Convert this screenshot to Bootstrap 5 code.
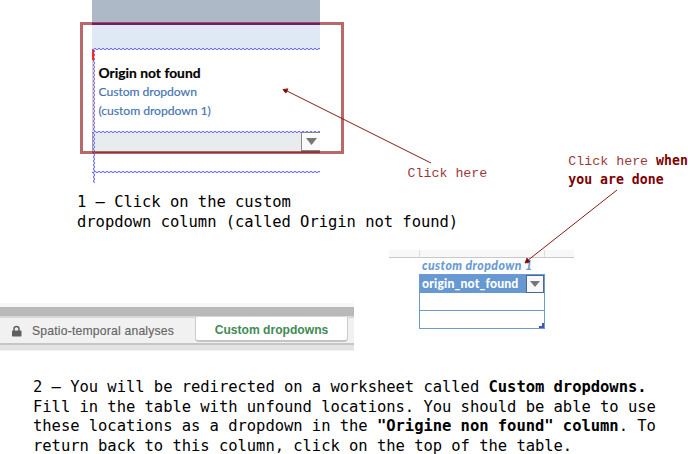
<!DOCTYPE html>
<html lang="en">
<head>
<meta charset="utf-8">
<title>Custom dropdowns guide</title>
<link href="https://cdn.jsdelivr.net/npm/bootstrap@5.3.0/dist/css/bootstrap.min.css" rel="stylesheet">
<style>
body{background:#fff;color:#000}
.guide{width:688px;height:454px}
.step{font:15.5px/19.6px "DejaVu Sans Mono","Liberation Mono",monospace;letter-spacing:-.036px;white-space:nowrap}
.note{font:13.3px/18px "Liberation Mono",monospace;color:#800000;white-space:nowrap}
.note span{opacity:.78}
.note b,.step b{font-weight:700}
.note b{font-family:"DejaVu Sans Mono",monospace;font-size:13.2px}
.upper{height:193.3px}
.sheet{width:228px;height:183px;margin-left:92px;font-family:Lato,Carlito,sans-serif}
.head-dark{height:23px;background:#adb9c7}
.head-light{height:25px;background:#dfe9f6;border-top:2px solid #711d6b}
.dots{height:2px;background:repeating-conic-gradient(#7272f4 0 25%,#dcdcff 0 50%) 0 0/4px 2px}
.vdots{left:1px;top:50px;width:2px;height:133px;background:repeating-conic-gradient(#7777f5 0 25%,#d4d4ff 0 50%) 0 0/2px 4px}
.cell{height:81px;padding:14px 0 0 5.5px;border-left:1px solid #f5c9ad;font-size:12.2px;letter-spacing:-.06px;line-height:18.3px;color:#3f72b2;-webkit-text-stroke:.15px #3f72b2;white-space:nowrap}
.cell b{font-size:13.8px;color:#000;letter-spacing:.02px;-webkit-text-stroke:.2px #000}
.cell-flag{left:0;top:50px;width:2px;height:10px;background:#f22}
.entry{height:20px;background:#e8ecef;border-left:1px solid #9aa1ac;border-bottom:1px solid #777}
.drop{width:19px;background:#fafafa;border:1px solid #888;border-right:0;border-bottom:2px solid #888;margin-top:-1px}
.frame{left:80px;top:22px;width:264px;height:132px;border:3px solid rgba(145,20,20,.64)}
.head-line{left:92px;top:23px;width:228px;height:2px;background:#711d6b}
.click{margin:165px 0 0 87.5px}
.done{margin:152px 0 0 81px}
.caption-one{margin-left:77px;height:56.7px}
.caption-one,.caption-one+div{position:static}
.lower{height:128.3px}
.tabs-strip{width:354px;height:48px;margin-top:53px;border-top:4px solid #f7f7f7;font-family:"Liberation Sans",Arial,sans-serif;background:#f1f1f1}
.strip-bar{height:9px;background:#b9b9b9}
.tab-row{height:29px;border-top:2px solid #d8d8d8;border-bottom:2px solid #c6c6c6;font-size:12.2px;color:#666;white-space:nowrap}
.strip-foot{height:5px;background:#e3e3e3}
.tab-a{width:195px;padding-left:11px;padding-top:2px;letter-spacing:.19px;-webkit-text-stroke:.15px #666}
.tab-a svg{margin-right:10px}
.tab-b{width:153px;height:25px;margin-top:-1px;background:#fff;color:#428a55;font-weight:700;border:1px solid #ccc;border-top:0;border-bottom:2px solid #c4c4c4;border-radius:0 0 4px 4px;font-size:12.1px;padding-top:3px}
.mini{width:185px;margin-left:35px;font-family:Lato,sans-serif}
.mini-head{height:8px;background:#f8f8f8;border-bottom:1px solid #c9c9c9}
.mini-head i{width:126px;margin-left:30px;border:1px solid #ddd;border-width:0 1px}
.mini-title{height:16px;padding-left:33px;font:italic 900 12.3px/16px Lato,sans-serif;letter-spacing:.42px;color:#6a9bd2;white-space:nowrap}
.mini-table{width:126px;height:55px;margin-left:30px;border:1px solid #6a9bd2}
.mini-name{height:18px;background:#6698d1;color:#fff;font-weight:900;font-size:12.2px;letter-spacing:.2px;padding-left:2px;white-space:nowrap}
.mini-drop{width:18px;height:18px;background:#f8f8f8;border:1px solid #4d6890}
.mini-row{height:18px;border-bottom:1px solid #6a9bd2}
.step-two{margin-left:33px}
</style>
<script src="https://cdn.jsdelivr.net/npm/bootstrap@5.3.0/dist/js/bootstrap.bundle.min.js"></script>
</head>
<body>
<main class="guide position-relative overflow-hidden">
  <div class="upper d-flex align-items-start">
    <div class="sheet position-relative flex-shrink-0">
      <div class="head-dark"></div>
      <div class="head-light"></div>
      <div class="dots"></div>
      <div class="cell"><b>Origin not found</b><br>Custom dropdown<br>(custom dropdown 1)</div>
      <div class="dots"></div>
      <div class="entry d-flex justify-content-end">
        <div class="drop d-flex align-items-center justify-content-center"><svg width="11" height="7"><path d="M0 0h11L5.5 7z" fill="#777"/></svg></div>
      </div>
      <div style="height:18px"></div>
      <div class="dots"></div>
      <div class="vdots position-absolute"></div>
      <div class="cell-flag position-absolute"></div>
    </div>
    <div class="note click"><span>Click here</span></div>
    <div class="note done"><span>Click here</span> <b>when<br>you are done</b></div>
  </div>
  <div class="step caption-one">1 – Click on the custom<br>dropdown column (called Origin not found)</div>
  <div class="lower d-flex align-items-start">
    <div class="tabs-strip flex-shrink-0">
      <div class="strip-bar"></div>
      <div class="tab-row d-flex">
        <div class="tab-a d-flex align-items-center"><svg width="11" height="12"><path d="M3 6V4a2.5 2.5 0 0 1 5 0v2" fill="none" stroke="#606060" stroke-width="1.5"/><rect x="1" y="5.4" width="9.5" height="6.2" rx=".8" fill="#606060"/></svg>Spatio-temporal analyses</div>
        <div class="tab-b d-flex align-items-center justify-content-center">Custom dropdowns</div>
      </div>
      <div class="strip-foot"></div>
    </div>
    <div class="mini">
      <div class="mini-head d-flex"><i></i></div>
      <div class="mini-title">custom dropdown 1</div>
      <div class="mini-table">
        <div class="mini-name d-flex align-items-center justify-content-between">origin_not_found<div class="mini-drop d-flex align-items-center justify-content-center"><svg width="10" height="6"><path d="M0 0h10L5 6z" fill="#777"/></svg></div></div>
        <div class="mini-row"></div>
        <div class="d-flex justify-content-end align-items-end" style="height:17px"><svg width="5" height="5"><path d="M3 0h2v5H0V3h3z" fill="#4455b5"/></svg></div>
      </div>
    </div>
  </div>
  <div class="step step-two">2 – You will be redirected on a worksheet called <b>Custom dropdowns.</b><br>Fill in the table with unfound locations. You should be able to use<br>these locations as a dropdown in the <b>"Origine non found" column</b>. To<br>return back to this column, click on the top of the table.</div>
  <div class="frame position-absolute"></div>
  <div class="head-line position-absolute"></div>
  <svg class="position-absolute top-0 start-0" width="688" height="454" fill="#800000" stroke="#8b1a1a">
    <path d="M431 163L285 90M617 190L527 261"/>
    <path d="M283 89.5l5-.6-2.2 4.2zM525 263l2-4.8 2.8 3.6z"/>
  </svg>
</main>
</body>
</html>
